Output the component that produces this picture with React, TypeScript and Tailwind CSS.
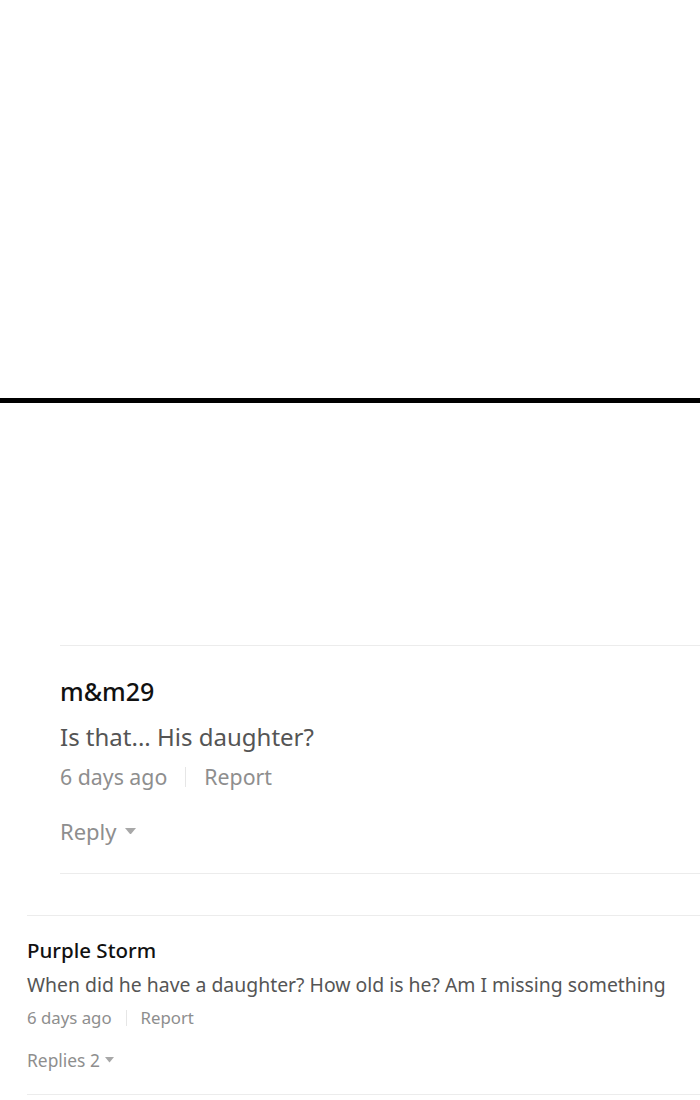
import React from 'react';

const Caret = ({ size }: { size: number }) => (
  <svg width={size} height={size * 0.6} viewBox="0 0 10 6" className="inline-block">
    <path d="M0 0 L10 0 L5 6 Z" fill="#a8a8a8" />
  </svg>
);

export default function App() {
  return (
    <div className="w-[700px] h-[1100px] bg-white overflow-hidden" style={{ fontFamily: '"Noto Sans", "Open Sans", sans-serif' }}>
      <div className="h-[398px]" />
      <div className="h-[5px] bg-black" />
      <div className="h-[242px]" />

      {/* first comment */}
      <div className="ml-[60px] border-t border-b border-[#ececec] pt-[30px] pb-[29px]">
        <div className="text-[25px] leading-[30px] font-medium text-[#111]">m&amp;m29</div>
        <div className="mt-[16px] text-[24px] leading-[30px] text-[#555]">Is that... His daughter?</div>
        <div className="mt-[12px] flex items-center text-[21.3px] leading-[26px] text-[#8e8e8e]">
          <span>6 days ago</span>
          <span className="mx-[18px] w-px h-[20px] bg-[#e6e6e6]" />
          <span>Report</span>
        </div>
        <div className="mt-[28px] flex items-center gap-[8px] text-[22px] leading-[26px] text-[#8e8e8e]">
          <span>Reply</span>
          <Caret size={11} />
        </div>
      </div>

      <div className="h-[41px]" />

      {/* second comment */}
      <div className="ml-[27px] border-t border-b border-[#ececec] pt-[22px] pb-[24px]">
        <div className="text-[20.5px] leading-[24px] font-medium text-[#111]">Purple Storm</div>
        <div className="mt-[11px] text-[19.4px] leading-[24px] text-[#555]">
          When did he have a daughter? How old is he? Am I missing something
        </div>
        <div className="mt-[11px] flex items-center text-[16.8px] leading-[20px] text-[#8e8e8e]">
          <span>6 days ago</span>
          <span className="mx-[14px] w-px h-[16px] bg-[#e6e6e6]" />
          <span>Report</span>
        </div>
        <div className="mt-[22px] flex items-center gap-[5px] text-[17.4px] leading-[20px] text-[#8e8e8e]">
          <span>Replies 2</span>
          <Caret size={9} />
        </div>
      </div>
    </div>
  );
}
